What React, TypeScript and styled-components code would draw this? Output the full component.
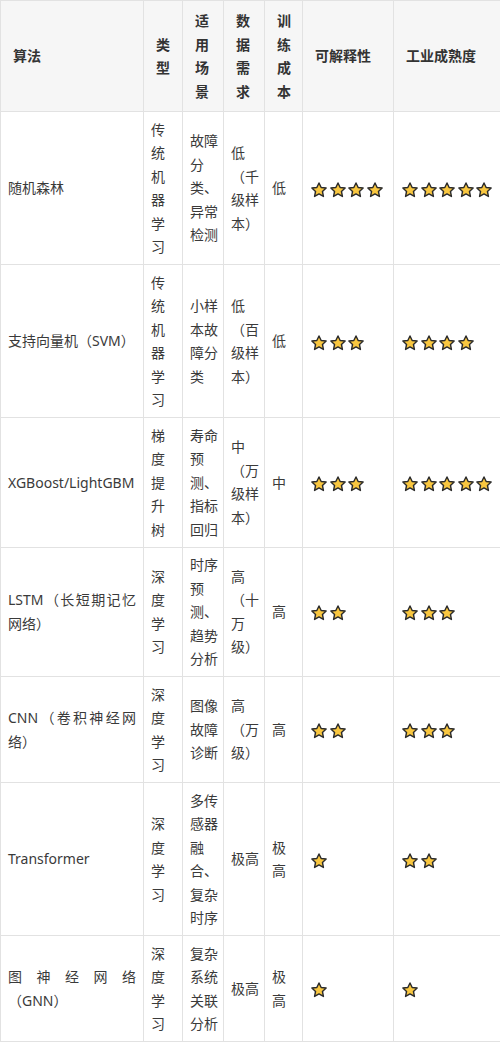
import React from "react";
import styled, { createGlobalStyle } from "styled-components";

interface AlgoRow {
  name: string;
  kind: string;
  scene: string;
  data: string;
  cost: string;
  explain: number;
  maturity: number;
}

const rows: AlgoRow[] = [
  { name: "随机森林", kind: "传统机器学习", scene: "故障分类、异常检测", data: "低（千级样本）", cost: "低", explain: 4, maturity: 5 },
  { name: "支持向量机（SVM）", kind: "传统机器学习", scene: "小样本故障分类", data: "低（百级样本）", cost: "低", explain: 3, maturity: 4 },
  { name: "XGBoost/LightGBM", kind: "梯度提升树", scene: "寿命预测、指标回归", data: "中（万级样本）", cost: "中", explain: 3, maturity: 5 },
  { name: "LSTM（长短期记忆网络）", kind: "深度学习", scene: "时序预测、趋势分析", data: "高（十万级）", cost: "高", explain: 2, maturity: 3 },
  { name: "CNN（卷积神经网络）", kind: "深度学习", scene: "图像故障诊断", data: "高（万级）", cost: "高", explain: 2, maturity: 3 },
  { name: "Transformer", kind: "深度学习", scene: "多传感器融合、复杂时序", data: "极高", cost: "极高", explain: 1, maturity: 2 },
  { name: "图神经网络（GNN）", kind: "深度学习", scene: "复杂系统关联分析", data: "极高", cost: "极高", explain: 1, maturity: 1 },
];

const GlobalStyle = createGlobalStyle`
  body {
    margin: 0;
    background: #ffffff;
    font-family: "Noto Sans", "Noto Sans CJK SC", sans-serif;
  }
`;

const Table = styled.table`
  width: 500px;
  table-layout: fixed;
  border-collapse: collapse;
  font-size: 14px;
  line-height: 23.5px;
  color: #3a3a3a;
  text-spacing-trim: space-all;
`;

const Head = styled.th`
  background: #f6f6f6;
  border: 1px solid #e2e2e2;
  padding: 8px 12px;
  text-align: left;
  vertical-align: middle;
  font-weight: 700;
  color: #333333;
`;

const Cell = styled.td`
  border: 1px solid #e2e2e2;
  padding: 5.5px 5px 5.5px 7px;
  text-align: justify;
  vertical-align: middle;
  word-break: normal;
`;

const NameCell = styled(Cell)`
  padding-right: 7px;
`;

const Stars = styled.span`
  display: inline-flex;
  gap: 0.5px;
  vertical-align: middle;
`;

const StarIcon = () => (
  <svg width="18" height="18" viewBox="0 0 24 24">
    <path
      d="M12 2.6l2.9 6 6.6.8-4.9 4.6 1.3 6.6L12 17.3l-5.9 3.3 1.3-6.6-4.9-4.6 6.6-.8z"
      fill="#f9c740"
      stroke="#2b2b2b"
      strokeWidth="1.9"
      strokeLinejoin="round"
    />
  </svg>
);

const Rating = ({ count }: { count: number }) => (
  <Stars>
    {Array.from({ length: count }).map((_, i) => (
      <StarIcon key={i} />
    ))}
  </Stars>
);

const App: React.FC = () => (
  <>
    <GlobalStyle />
    <Table>
      <colgroup>
        <col style={{ width: 143 }} />
        <col style={{ width: 39 }} />
        <col style={{ width: 41 }} />
        <col style={{ width: 41 }} />
        <col style={{ width: 38 }} />
        <col style={{ width: 91 }} />
        <col style={{ width: 107 }} />
      </colgroup>
      <thead>
        <tr>
          <Head>算法</Head>
          <Head>类型</Head>
          <Head>适用场景</Head>
          <Head>数据需求</Head>
          <Head>训练成本</Head>
          <Head>可解释性</Head>
          <Head>工业成熟度</Head>
        </tr>
      </thead>
      <tbody>
        {rows.map((row) => (
          <tr key={row.name}>
            <NameCell>{row.name}</NameCell>
            <Cell>{row.kind}</Cell>
            <Cell>{row.scene}</Cell>
            <Cell>{row.data}</Cell>
            <Cell>{row.cost}</Cell>
            <Cell>
              <Rating count={row.explain} />
            </Cell>
            <Cell>
              <Rating count={row.maturity} />
            </Cell>
          </tr>
        ))}
      </tbody>
    </Table>
  </>
);

export default App;
